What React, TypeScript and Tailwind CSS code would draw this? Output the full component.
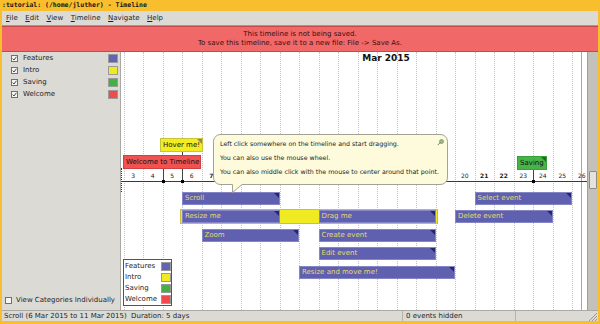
import React from "react";

const DAY = 19.5;
// canvas starts at x=121; 6 Mar begins at x=182
const dayX = (d: number) => 61 + (d - 6) * DAY;
const days = Array.from({ length: 24 }, (_, i) => i + 3);
// labels 8..19 sit under the help balloon
const labelDays = days.filter((d) => d < 8 || d > 19);
const weekend = [7, 8, 14, 15, 21, 22];

const categories = [
  { name: "Features", color: "bg-[#6464b4]" },
  { name: "Intro", color: "bg-[#f0ea20]" },
  { name: "Saving", color: "bg-[#44b044]" },
  { name: "Welcome", color: "bg-[#ee4c4c]" },
];

const bars = [
  { text: "Scroll", from: 6, to: 11, top: 140 },
  { text: "Resize me", from: 6, to: 11, top: 158 },
  { text: "Drag me", from: 13, to: 19, top: 158 },
  { text: "Zoom", from: 7, to: 12, top: 177 },
  { text: "Create event", from: 13, to: 19, top: 177 },
  { text: "Edit event", from: 13, to: 19, top: 195 },
  { text: "Resize and move me!", from: 12, to: 20, top: 214 },
  { text: "Select event", from: 21, to: 26, top: 140 },
  { text: "Delete event", from: 20, to: 25, top: 158 },
];

const points = [
  {
    text: "Hover me!",
    at: 6,
    bottom: 100,
    box: "left-[39px] top-[86px] w-[43px] bg-[#f2ec22] border-[#c9c23a]",
    corner: "border-t-[#8c8a5c]",
  },
  {
    text: "Welcome to Timeline",
    at: 5,
    bottom: 117,
    box: "left-[2px] top-[103px] w-[78px] bg-[#f05252] border-[#d04040]",
    corner: "",
  },
  {
    text: "Saving",
    at: 24,
    bottom: 118,
    box: "left-[396px] top-[104px] w-[30px] bg-[#48b448] border-[#38a038]",
    corner: "border-t-[#1e6a1e]",
  },
];

function Check({ on = true }: { on?: boolean }) {
  return (
    <span className="w-[7px] h-[7px] shrink-0 border border-[#707070] bg-[#f6f5f3] flex items-center justify-center">
      {on && (
        <svg width="5" height="5" viewBox="0 0 5 5">
          <path d="M0.6 2.6 L2 4 L4.4 0.8" fill="none" stroke="#333" strokeWidth="0.9" />
        </svg>
      )}
    </span>
  );
}

function Mnemonic({ label }: { label: string }) {
  return (
    <span>
      <span className="underline underline-offset-[1px]">{label[0]}</span>
      {label.slice(1)}
    </span>
  );
}

export default function App() {
  return (
    <div className="w-[600px] h-[324px] overflow-hidden bg-[#f8be2e] flex flex-col px-[2px] pb-[3px] font-['DejaVu_Sans',sans-serif] text-[7px] text-[#1e1e1e]">
      {/* title bar */}
      <div className="h-[11px] shrink-0 flex items-center font-['DejaVu_Sans_Mono',monospace] font-bold text-[6.5px] text-[#151515] leading-none">
        :tutorial: (/home/jluther) - Timeline
      </div>

      {/* menu */}
      <div className="h-[15px] shrink-0 bg-[#dcdad5] border-b border-[#9c9a94] flex items-center gap-[7.6px] pl-[4px] leading-none">
        {["File", "Edit", "View", "Timeline", "Navigate", "Help"].map((m) => (
          <Mnemonic key={m} label={m} />
        ))}
      </div>

      {/* not saved banner */}
      <div className="h-[26px] shrink-0 bg-[#f06868] border-y border-[#c44a4a] flex flex-col items-center justify-center text-[#3c0e0e] leading-[9px]">
        <div>This timeline is not being saved.</div>
        <div>To save this timeline, save it to a new file: File -&gt; Save As.</div>
      </div>

      <div className="flex-1 min-h-0 flex">
        {/* sidebar */}
        <div className="w-[119px] shrink-0 bg-[#dcdad5] border-r border-[#aaa8a2] flex flex-col justify-between pb-[4px]">
          <div className="flex flex-col">
            {categories.map((c) => (
              <div key={c.name} className="h-[12.2px] flex items-center pl-[9px] pr-[2px]">
                <Check />
                <span className="ml-[5px] flex-1 leading-none">{c.name}</span>
                <span className={`w-[10px] h-[9px] border border-[#9a9a9a] ${c.color}`} />
              </div>
            ))}
          </div>
          <div className="h-[12px] flex items-center pl-[3px]">
            <Check on={false} />
            <span className="ml-[4px] leading-none">View Categories Individually</span>
          </div>
        </div>

        {/* timeline canvas */}
        <div className="flex-1 relative bg-white overflow-hidden">
          {days.map((d) => (
            <div
              key={d}
              className="absolute top-0 bottom-0 border-l border-dotted border-[#c4c4c4]"
              style={{ left: dayX(d) }}
            />
          ))}
          <div className="absolute top-0 bottom-0 left-[460px] w-px bg-[#e88a8a]" />

          <div className="absolute left-[240px] top-[1px] w-[50px] text-center font-bold text-[9px] leading-[11px] text-[#111]">
            Mar 2015
          </div>

          {/* axis */}
          <div className="absolute left-0 right-0 top-[129px] h-px bg-[#3a3a3a]" />
          <div className="absolute left-0 top-[116px] h-[24px] border-l border-dotted border-[#333]" />
          {labelDays.map((d) => (
            <div
              key={d}
              className={`absolute top-[120px] w-[19.5px] h-[8px] text-center text-[6px] leading-[8px] text-[#222] ${
                weekend.includes(d) ? "font-bold" : ""
              }`}
              style={{ left: dayX(d) }}
            >
              {d}
            </div>
          ))}

          {/* point events */}
          {points.map((p) => (
            <div
              key={p.text + "line"}
              className="absolute w-px bg-[#444]"
              style={{ left: dayX(p.at), top: p.bottom, height: 129 - p.bottom }}
            />
          ))}
          {points.map((p) => (
            <div
              key={p.text + "dot"}
              className="absolute w-[3px] h-[3px] bg-black"
              style={{ left: dayX(p.at) - 1, top: 128 }}
            />
          ))}
          {points.map((p) => (
            <div
              key={p.text}
              className={`absolute h-[14px] border flex items-center pl-[2px] leading-none text-[#111] ${p.box}`}
            >
              {p.text}
              {p.corner && (
                <span
                  className={`absolute top-0 right-0 w-0 h-0 border-l-[5px] border-l-transparent border-t-[5px] ${p.corner}`}
                />
              )}
            </div>
          ))}

          {/* selection highlight */}
          <div className="absolute left-[59px] top-[157px] w-[258px] h-[15px] bg-[#f0ea22] border border-[#c8c13c]" />

          {/* duration events */}
          {bars.map((b) => (
            <div
              key={b.text}
              className="absolute h-[13px] bg-[#6060b0] border border-[#8686c6] flex items-center pl-[2px] leading-none text-[#e4dc6a]"
              style={{ left: dayX(b.from), top: b.top, width: (b.to - b.from) * DAY }}
            >
              {b.text}
              <span className="absolute top-0 right-0 w-0 h-0 border-l-[5px] border-l-transparent border-t-[5px] border-t-[#262670]" />
            </div>
          ))}

          {/* balloon */}
          <svg className="absolute left-[91px] top-[81px]" width="238" height="62" viewBox="0 0 238 62">
            <path
              d="M8 1.5 H228 A7 7 0 0 1 235.5 8.5 V44 A7 7 0 0 1 228 51.5 H30 L20.5 59.5 L20.5 51.5 H8 A7 7 0 0 1 1.5 44 V8.5 A7 7 0 0 1 8 1.5 Z"
              fill="#fdfbdc"
              stroke="#a4a294"
              strokeWidth="1"
            />
            <g transform="translate(225 6)">
              <circle cx="4.5" cy="2.5" r="2" fill="#9cc08a" stroke="#5c7a50" strokeWidth="0.6" />
              <path d="M3.2 3.6 L0.8 6" stroke="#555" strokeWidth="0.8" />
            </g>
          </svg>
          <div className="absolute left-[99px] top-[85px] flex flex-col text-[6.3px] leading-[14px] text-[#1a1a1a]">
            <div>Left click somewhere on the timeline and start dragging.</div>
            <div>You can also use the mouse wheel.</div>
            <div>You can also middle click with the mouse to center around that point.</div>
          </div>

          {/* legend */}
          <div className="absolute left-[2px] top-[207px] w-[49px] h-[47px] bg-white border border-[#555] flex flex-col justify-center pl-[1px]">
            {categories.map((c) => (
              <div key={c.name} className="h-[11px] flex items-center justify-between leading-none">
                <span>{c.name}</span>
                <span className={`w-[10px] h-[9px] border border-[#9a9a9a] ${c.color}`} />
              </div>
            ))}
          </div>
        </div>

        {/* scrollbar */}
        <div className="w-[11px] shrink-0 bg-[#c4c1bb] border-l border-[#a09e98] flex flex-col">
          <div className="h-[119px]" />
          <div className="h-[18px] mx-[1px] bg-[#e4e2de] border border-[#8e8c86] rounded-[1px]" />
        </div>
      </div>

      {/* status bar */}
      <div className="h-[11px] shrink-0 bg-[#dcdad5] border-t border-[#aaa8a2] flex leading-none">
        <div className="w-[401px] pl-[2px] flex items-center border-r border-[#b4b2ac]">
          Scroll (6 Mar 2015 to 11 Mar 2015)&nbsp;&nbsp;Duration: 5 days
        </div>
        <div className="w-[113px] pl-[3px] flex items-center border-r border-[#b4b2ac]">0 events hidden</div>
        <div className="flex-1 flex items-end justify-end">
          <svg width="10" height="9" viewBox="0 0 10 9">
            <path d="M9 1 L1 9 M9 4 L4 9 M9 7 L7 9" stroke="#8a8882" strokeWidth="0.8" />
          </svg>
        </div>
      </div>
    </div>
  );
}
